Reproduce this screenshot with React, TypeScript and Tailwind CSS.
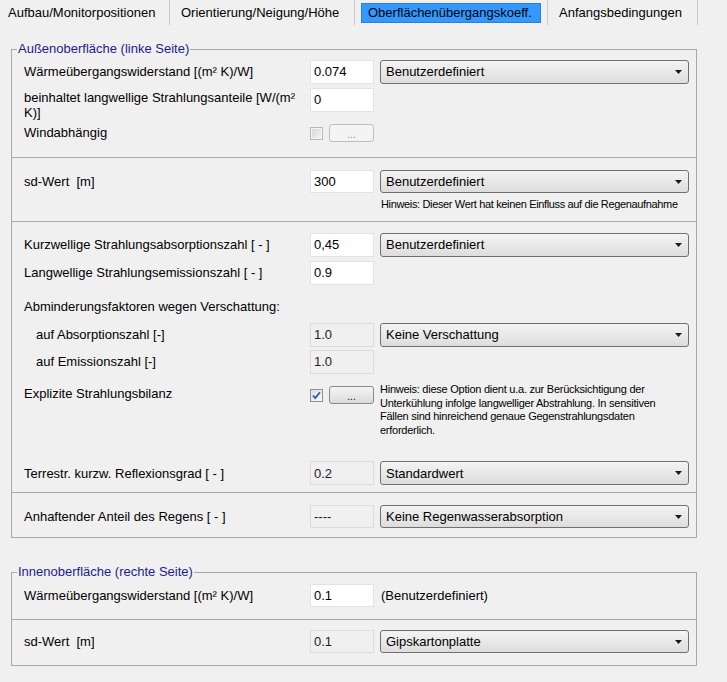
import React from 'react';

const FONT = "font-['Liberation_Sans',Arial,sans-serif]";

function TextBox({ value, disabled }: { value: string; disabled?: boolean }) {
  return (
    <div
      className={
        'w-[64px] h-full flex items-center pl-[3px] border ' +
        (disabled ? 'bg-[#f0f0f0] border-[#dcdcdc] text-[#222]' : 'bg-white border-[#e2e3ea]')
      }
    >
      {value}
    </div>
  );
}

function Combo({ value }: { value: string }) {
  return (
    <div className="ml-[6px] w-[309px] h-full flex items-center justify-between pl-[5px] pr-[6px] rounded-[3px] border border-[#707070] bg-gradient-to-b from-[#f4f4f4] to-[#dddddd]">
      <span>{value}</span>
      <svg width="7" height="4" viewBox="0 0 7 4">
        <path d="M0 0h7L3.5 4z" fill="#1a1a1a" />
      </svg>
    </div>
  );
}

function CheckBox({ checked, disabled }: { checked?: boolean; disabled?: boolean }) {
  return (
    <div
      className={
        'w-[13px] h-[13px] border flex items-center justify-center ' +
        (disabled ? 'border-[#b8b8b8] bg-[#f4f4f4]' : 'border-[#8e8f8f] bg-gradient-to-br from-[#dcdcdc] to-[#fafafa]')
      }
    >
      {checked && (
        <svg width="9" height="9" viewBox="0 0 9 9">
          <path d="M1 4.5l2.2 2.6L8 1.2" stroke="#3a58a8" strokeWidth="1.8" fill="none" />
        </svg>
      )}
      {!checked && <div className="w-[9px] h-[9px] bg-gradient-to-br from-[#d8d8d8] to-[#f2f2f2]" />}
    </div>
  );
}

function DotButton({ disabled }: { disabled?: boolean }) {
  return (
    <div
      className={
        'ml-[6px] w-[45px] h-[18px] rounded-[3px] border flex items-end justify-center pb-[1px] text-[10px] leading-none ' +
        (disabled
          ? 'border-[#bfbfbf] bg-[#f4f4f4] text-[#8c8c8c]'
          : 'border-[#8a8a8a] bg-gradient-to-b from-[#f4f4f4] to-[#dcdcdc] text-black')
      }
    >
      ...
    </div>
  );
}

function Row({
  label,
  indent,
  className,
  children,
}: {
  label: React.ReactNode;
  indent?: boolean;
  className?: string;
  children: React.ReactNode;
}) {
  return (
    <div className={'flex items-center ' + (className ?? '')}>
      <div className={'w-[298px] shrink-0 ' + (indent ? 'pl-[24px]' : 'pl-[12px]')}>{label}</div>
      <div className="flex items-center h-full">{children}</div>
    </div>
  );
}

function Separator({ className }: { className?: string }) {
  return <div className={'h-px bg-[#a9a9a9] ' + (className ?? '')} />;
}

function Group({ title, className, children }: { title: string; className?: string; children: React.ReactNode }) {
  return (
    <fieldset className={'ml-[11px] w-[686px] border border-[#a9a9a9] ' + (className ?? '')}>
      <legend className="ml-[5px] px-[1px] leading-[16px] text-[#1c1c8c]">{title}</legend>
      {children}
    </fieldset>
  );
}

export default function App() {
  const tabs = [
    { name: 'Aufbau/Monitorpositionen', w: 'w-[170px] pl-[8px]' },
    { name: 'Orientierung/Neigung/Höhe', w: 'w-[185px] pl-[11px]' },
    { name: 'Oberflächenübergangskoeff.', w: 'w-[193px]', active: true },
    { name: 'Anfangsbedingungen', w: 'w-[150px] pl-[11px]' },
  ];

  return (
    <div className={'w-[727px] h-[682px] bg-[#f0f0f0] text-[13px] text-black overflow-hidden ' + FONT}>
      <div className="flex h-[25px]">
        {tabs.map((t) => (
          <div key={t.name} className={'flex items-center border-r border-[#c9c9c9] ' + t.w}>
            {t.active ? (
              <div className="ml-[6px] w-[180px] h-[20px] flex items-center pl-[6px] bg-[#3399ff] border border-[#2a7fd4] text-black">
                {t.name}
              </div>
            ) : (
              t.name
            )}
          </div>
        ))}
      </div>

      <Group title="Außenoberfläche (linke Seite)" className="mt-[16px] pb-[9px]">
        <Row label="Wärmeübergangswiderstand [(m² K)/W]" className="mt-[3px] h-[24px]">
          <TextBox value="0.074" />
          <Combo value="Benutzerdefiniert" />
        </Row>
        <div className="flex items-start mt-[4px] h-[24px]">
          <div className="w-[298px] shrink-0 pl-[12px] leading-[15px] pt-[2px]">
            beinhaltet langwellige Strahlungsanteile [W/(m²
            <br />
            K)]
          </div>
          <div className="h-[24px] flex">
            <TextBox value="0" />
          </div>
        </div>
        <Row label="Windabhängig" className="mt-[12px] h-[18px]">
          <CheckBox disabled />
          <DotButton disabled />
        </Row>
        <Separator className="mt-[15px]" />

        <Row label={'sd-Wert\u00a0 [m]'} className="mt-[12px] h-[23px]">
          <TextBox value="300" />
          <Combo value="Benutzerdefiniert" />
        </Row>
        <div className="mt-[5px] pl-[369px] text-[11px] leading-[13px] whitespace-nowrap tracking-[-0.35px]">
          Hinweis: Dieser Wert hat keinen Einfluss auf die Regenaufnahme
        </div>
        <Separator className="mt-[10px]" />

        <Row label="Kurzwellige Strahlungsabsorptionszahl [ - ]" className="mt-[11px] h-[24px]">
          <TextBox value="0,45" />
          <Combo value="Benutzerdefiniert" />
        </Row>
        <Row label="Langwellige Strahlungsemissionszahl [ - ]" className="mt-[4px] h-[24px]">
          <TextBox value="0.9" />
        </Row>
        <div className="mt-[14px] pl-[12px] leading-[16px]">Abminderungsfaktoren wegen Verschattung:</div>
        <Row label="auf Absorptionszahl [-]" indent className="mt-[8px] h-[24px]">
          <TextBox value="1.0" disabled />
          <Combo value="Keine Verschattung" />
        </Row>
        <Row label="auf Emissionszahl [-]" indent className="mt-[3px] h-[24px]">
          <TextBox value="1.0" disabled />
        </Row>
        <div className="flex items-start mt-[9px]">
          <div className="w-[298px] shrink-0 pl-[12px] pt-[3px] leading-[15px]">Explizite Strahlungsbilanz</div>
          <div className="flex items-center h-[18px] mt-[3px]">
            <CheckBox checked />
            <DotButton />
          </div>
          <div className="ml-[6px] text-[11px] leading-[13.6px] whitespace-nowrap tracking-[-0.25px]">
            Hinweis: diese Option dient u.a. zur Berücksichtigung der
            <br />
            Unterkühlung infolge langwelliger Abstrahlung. In sensitiven
            <br />
            Fällen sind hinreichend genaue Gegenstrahlungsdaten
            <br />
            erforderlich.
          </div>
        </div>
        <Row label="Terrestr. kurzw. Reflexionsgrad [ - ]" className="mt-[24px] h-[24px]">
          <TextBox value="0.2" disabled />
          <Combo value="Standardwert" />
        </Row>
        <Separator className="mt-[7px]" />

        <Row label="Anhaftender Anteil des Regens [ - ]" className="mt-[12px] h-[23px]">
          <TextBox value="----" disabled />
          <Combo value="Keine Regenwasserabsorption" />
        </Row>
      </Group>

      <Group title="Innenoberfläche (rechte Seite)" className="mt-[26px] pb-[12px]">
        <Row label="Wärmeübergangswiderstand [(m² K)/W]" className="mt-[4px] h-[23px]">
          <TextBox value="0.1" />
          <span className="ml-[7px]">(Benutzerdefiniert)</span>
        </Row>
        <Separator className="mt-[12px]" />
        <Row label={'sd-Wert\u00a0 [m]'} className="mt-[10px] h-[23px]">
          <TextBox value="0.1" disabled />
          <Combo value="Gipskartonplatte" />
        </Row>
      </Group>
    </div>
  );
}
